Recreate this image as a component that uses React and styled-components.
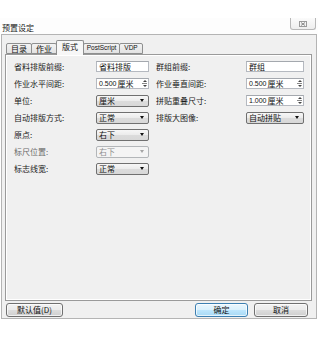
import React from 'react'
import styled, { createGlobalStyle } from 'styled-components'

const GlobalStyle = createGlobalStyle`
  body {
    margin: 0;
    background: #fff;
    font-family: "Noto Sans CJK SC", "Liberation Sans", sans-serif;
  }
  * { box-sizing: border-box; }
`

const Window = styled.div`
  margin-top: 18px;
  width: 318px;
  display: flex;
  flex-direction: column;
`

const TitleBar = styled.div`
  height: 16px;
  display: flex;
  justify-content: space-between;
  background: #fdfdfd;
  padding-left: 2px;
`

const Title = styled.span`
  font-size: 8px;
  line-height: 16px;
  padding-top: 2px;
  color: #222;
`

const CloseButton = styled.div`
  width: 26px;
  height: 12px;
  margin-right: 2px;
  border: 1px solid #b8b8b8;
  border-top: none;
  border-radius: 0 0 3px 3px;
  background: linear-gradient(#fbfbfb, #eeeeee);
  display: flex;
  align-items: center;
  justify-content: center;
`

const Client = styled.div`
  margin-left: 1px;
  width: 316px;
  height: 285px;
  border: 1px solid #b4b4b4;
  background: #f0f0f0;
  padding: 5px 4px 1px 3px;
  display: flex;
  flex-direction: column;
`

const TabRow = styled.div`
  height: 14px;
  display: flex;
  align-items: flex-end;
  padding-left: 1px;
  position: relative;
  z-index: 1;
`

const Tab = styled.div`
  width: ${p => p.w}px;
  height: ${p => (p.active ? 15 : 11)}px;
  margin-bottom: ${p => (p.active ? -1 : 0)}px;
  margin-left: ${p => (p.first ? 0 : -1)}px;
  border: 1px solid #8e8f8f;
  border-bottom: ${p => (p.active ? 'none' : '1px solid #8e8f8f')};
  border-radius: 2px 2px 0 0;
  background: ${p => (p.active ? '#f7f7f7' : 'linear-gradient(#f3f3f3, #e2e2e2)')};
  display: flex;
  align-items: center;
  justify-content: center;
  font-size: ${p => (p.latin ? 6.5 : 8)}px;
  font-family: ${p => (p.latin ? '"Liberation Sans", sans-serif' : 'inherit')};
  color: #111;
  white-space: nowrap;
  line-height: 1;
  padding-bottom: ${p => (p.active ? 2 : 0)}px;
`

const Panel = styled.div`
  height: 247px;
  border: 1px solid #9a9a9a;
  box-shadow: inset 1px 1px 0 #fff, inset -1px -1px 0 #fff;
  background: #f0f0f0;
  padding: 3px 0 0 8px;
  display: flex;
  gap: 7px;
  align-items: flex-start;
`

const Column = styled.div`
  display: grid;
  grid-template-columns: ${p => p.cols};
  grid-auto-rows: 17px;
  align-items: center;
`

const Label = styled.span`
  font-size: 8px;
  color: ${p => (p.disabled ? '#6a6a6a' : '#1a1a1a')};
  white-space: nowrap;
  line-height: 1;
`

const TextBox = styled.div`
  height: 11px;
  background: #fff;
  border: 1px solid #b5b9c0;
  border-top-color: #a4a8ae;
  font-size: 8px;
  line-height: 9px;
  padding-left: 2px;
  color: #111;
  white-space: nowrap;
  display: flex;
  align-items: center;
`

const Num = styled.span`
  font-family: "Liberation Sans", sans-serif;
  font-size: 7px;
  margin-right: 1px;
`

const SpinArrows = styled.div`
  margin-left: auto;
  width: 7px;
  height: 9px;
  display: flex;
  flex-direction: column;
  align-items: center;
  justify-content: center;
  gap: 1px;
`

const Arrow = styled.div`
  width: 0;
  height: 0;
  border-left: 2px solid transparent;
  border-right: 2px solid transparent;
  ${p => (p.up ? 'border-bottom' : 'border-top')}: 2px solid #444;
`

const SpinLine = styled.div`
  width: 5px;
  height: 1px;
  background: #888;
`

const Select = styled.div`
  height: 12px;
  border: 1px solid ${p => (p.disabled ? '#b3b6b9' : '#707070')};
  border-radius: 2px;
  background: ${p => (p.disabled ? '#f4f4f4' : 'linear-gradient(#f7f7f7 0%, #ebebeb 50%, #dcdcdc 51%, #d8d8d8 100%)')};
  display: flex;
  align-items: center;
  padding: 0 4px 0 2px;
  font-size: 8px;
  line-height: 1;
  color: ${p => (p.disabled ? '#8f8f8f' : '#111')};
  white-space: nowrap;
`

const Caret = styled.div`
  margin-left: auto;
  width: 0;
  height: 0;
  border-left: 2.5px solid transparent;
  border-right: 2.5px solid transparent;
  border-top: 3px solid ${p => (p.disabled ? '#a5a5a5' : '#111')};
`

const ButtonRow = styled.div`
  margin-top: 2px;
  height: 14px;
  display: flex;
  padding: 0 4px 0 1px;
`

const Button = styled.div`
  width: ${p => p.w}px;
  height: 14px;
  margin-left: ${p => p.gap || 0}px;
  border: 1px solid ${p => (p.primary ? '#3c7fb1' : '#707070')};
  border-radius: 3px;
  background: ${p =>
    p.primary
      ? 'linear-gradient(#eaf6fd 0%, #d9f0fc 50%, #bee6fd 51%, #a7d9f5 100%)'
      : 'linear-gradient(#f2f2f2 0%, #ebebeb 50%, #dddddd 51%, #cfcfcf 100%)'};
  box-shadow: inset 0 0 0 1px rgba(255, 255, 255, 0.7);
  display: flex;
  align-items: center;
  justify-content: center;
  font-size: 8px;
  line-height: 1;
  color: #111;
`

const Spacer = styled.div`
  flex: 1;
`

const Spin = ({ value }) => (
  <TextBox>
    <Num>{value}</Num>厘米
    <SpinArrows>
      <Arrow up />
      <SpinLine />
      <Arrow />
    </SpinArrows>
  </TextBox>
)

const Combo = ({ children, disabled }) => (
  <Select disabled={disabled}>
    {children}
    <Caret disabled={disabled} />
  </Select>
)

export default function App() {
  return (
    <>
      <GlobalStyle />
      <Window>
        <TitleBar>
          <Title>预置设定</Title>
          <CloseButton>
            <svg width="8" height="6" viewBox="0 0 8 6">
              <rect x="0.5" y="0.5" width="7" height="5" fill="none" stroke="#9a9a9a" strokeWidth="1" />
              <path d="M2 1.5 L6 4.5 M6 1.5 L2 4.5" stroke="#8a8a8a" strokeWidth="1" />
            </svg>
          </CloseButton>
        </TitleBar>
        <Client>
          <TabRow>
            <Tab first w={26}>目录</Tab>
            <Tab w={26}>作业</Tab>
            <Tab active w={28}>版式</Tab>
            <Tab latin w={37}>PostScript</Tab>
            <Tab latin w={24}>VDP</Tab>
          </TabRow>
          <Panel>
            <Column cols="82px 53px">
              <Label>省料排版前缀:</Label>
              <TextBox>省料排版</TextBox>
              <Label>作业水平间距:</Label>
              <Spin value="0.500" />
              <Label>单位:</Label>
              <Combo>厘米</Combo>
              <Label>自动排版方式:</Label>
              <Combo>正常</Combo>
              <Label>原点:</Label>
              <Combo>右下</Combo>
              <Label disabled>标尺位置:</Label>
              <Combo disabled>右下</Combo>
              <Label>标志线宽:</Label>
              <Combo>正常</Combo>
            </Column>
            <Column cols="90px 58px">
              <Label>群组前缀:</Label>
              <TextBox>群组</TextBox>
              <Label>作业垂直间距:</Label>
              <Spin value="0.500" />
              <Label>拼贴重叠尺寸:</Label>
              <Spin value="1.000" />
              <Label>排版大图像:</Label>
              <Combo>自动拼贴</Combo>
            </Column>
          </Panel>
          <ButtonRow>
            <Button w={57}>默认值(D)</Button>
            <Spacer />
            <Button primary w={53}>确定</Button>
            <Button w={54} gap={6}>取消</Button>
          </ButtonRow>
        </Client>
      </Window>
    </>
  )
}
